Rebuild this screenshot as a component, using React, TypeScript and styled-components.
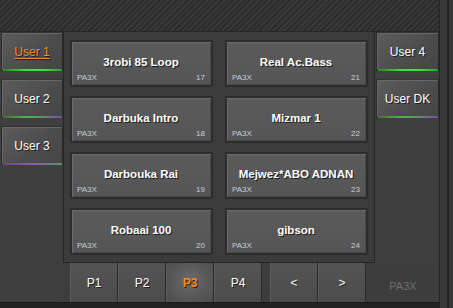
import styled, { createGlobalStyle } from "styled-components";

const Global = createGlobalStyle`
    html, body {
        margin: 0;
        padding: 0;
        background: #2b2b2b;
        font-family: "Liberation Sans", Arial, sans-serif;
    }
`;

const Screen = styled.div`
    width: 453px;
    height: 308px;
    display: flex;
    overflow: hidden;
`;

const Main = styled.div`
    width: 439px;
    display: flex;
    flex-direction: column;
`;

const Edge = styled.div`
    width: 14px;
    background: #383838;
    border-left: 1px solid #242424;
    box-sizing: border-box;
    display: flex;
    justify-content: flex-end;
    padding-right: 4px;

    &::after {
        content: "";
        width: 2px;
        background: #232323;
    }
`;

const Stripes = styled.div`
    height: 31px;
    border-bottom: 1px solid #262626;
    background: repeating-linear-gradient(
        135deg,
        #2c2c2c 0px,
        #2c2c2c 2px,
        #393939 2px,
        #393939 4px
    );
`;

const Body = styled.div`
    display: grid;
    grid-template-columns: 63px 312px 64px;
    grid-template-rows: 231px 39px;
    background: #3d3d3d;
`;

const TabColumn = styled.div<{ $side: "left" | "right" }>`
    grid-column: ${(p) => (p.$side === "left" ? 1 : 3)};
    grid-row: ${(p) => (p.$side === "left" ? "1 / 3" : "1")};
    display: flex;
    flex-direction: column;
    gap: 8px;
    background: #3f3f3f;
    padding-left: 1px;
`;

const Tab = styled.div<{ $active?: boolean; $line: "green" | "mixed" | "purple" }>`
    height: 39px;
    box-sizing: border-box;
    display: flex;
    align-items: center;
    justify-content: center;
    background: linear-gradient(135deg, #5c5c5c 0%, #4d4d4d 55%, #454545 100%);
    border: 1px solid #2a2a2a;
    border-top-color: #333;
    box-shadow: inset 1px 1px 0 #676767;
    position: relative;
    font-size: 12px;
    color: ${(p) => (p.$active ? "#ff8c1a" : "#ffffff")};
    text-decoration: ${(p) => (p.$active ? "underline" : "none")};
    text-underline-offset: 2px;
    text-shadow: 1px 1px 0 #1e1e1e;

    &::after {
        content: "";
        position: absolute;
        left: 1px;
        right: 0;
        bottom: -1px;
        height: 2px;
        background: ${(p) =>
            p.$line === "green"
                ? "linear-gradient(90deg, #2a8a2a, #3ee03e 40%, #3ee03e 70%, #2fa02f)"
                : p.$line === "mixed"
                ? "linear-gradient(90deg, #4a6a3a, #4fb84f 40%, #7a4f9a 100%)"
                : "linear-gradient(90deg, #6a4a7a, #8a5aa8 50%, #5a9a5a)"};
    }
`;

const Panel = styled.div`
    grid-column: 2;
    grid-row: 1;
    background: #3b3b3b;
    border: 1px solid #262626;
    border-top: none;
    box-sizing: border-box;
    padding: 8px 7px 7px 6px;
    display: grid;
    grid-template-columns: 143px 143px;
    grid-auto-rows: 47px;
    column-gap: 12px;
    row-gap: 9px;
`;

const Card = styled.div`
    box-sizing: border-box;
    border: 2px solid #2c2c2c;
    background: linear-gradient(180deg, #5b5b5b 0%, #555555 100%);
    box-shadow: inset 1px 1px 0 #6c6c6c, inset -1px -1px 0 #4a4a4a;
    display: grid;
    grid-template-rows: 1fr auto;
    padding: 0 6px 3px 5px;
`;

const CardTitle = styled.div`
    align-self: center;
    text-align: center;
    font-size: 11.5px;
    font-weight: bold;
    color: #ffffff;
    text-shadow: 1px 1px 0 #1c1c1c;
    padding-top: 9px;
`;

const CardFoot = styled.div`
    display: flex;
    justify-content: space-between;
    font-size: 8px;
    color: #c8d0dc;
    line-height: 9px;
`;

const ButtonBar = styled.div`
    grid-column: 2;
    grid-row: 2;
    display: flex;
    padding-left: 7px;
    background: #3d3d3d;
`;

const Group = styled.div`
    display: flex;
    & + & {
        margin-left: 8px;
    }
`;

const PageButton = styled.div<{ $active?: boolean }>`
    width: 48px;
    height: 39px;
    box-sizing: border-box;
    display: flex;
    align-items: center;
    justify-content: center;
    border-right: 1px solid #2a2a2a;
    border-left: 1px solid #5c5c5c;
    background: ${(p) =>
        p.$active
            ? "radial-gradient(ellipse at 50% 45%, #6a6a6a 0%, #575757 60%, #4c4c4c 100%)"
            : "linear-gradient(180deg, #545454 0%, #4b4b4b 100%)"};
    font-size: 12px;
    font-weight: ${(p) => (p.$active ? "bold" : "normal")};
    color: ${(p) => (p.$active ? "#ff8c1a" : "#ffffff")};
    text-shadow: 1px 1px 0 #1e1e1e;
`;

const Brand = styled.div`
    grid-column: 3;
    grid-row: 2;
    display: flex;
    align-items: center;
    justify-content: center;
    padding-top: 6px;
    font-size: 11px;
    color: #6e6e6e;
    margin-left: -8px;
`;

const Floor = styled.div`
    height: 6px;
    background: #222;
    border-top: 1px solid #1a1a1a;
    box-sizing: border-box;
`;

const cards = [
    { title: "3robi 85 Loop", n: 17 },
    { title: "Real Ac.Bass", n: 21 },
    { title: "Darbuka Intro", n: 18 },
    { title: "Mizmar 1", n: 22 },
    { title: "Darbouka Rai", n: 19 },
    { title: "Mejwez*ABO ADNAN", n: 23 },
    { title: "Robaai 100", n: 20 },
    { title: "gibson", n: 24 },
];

export default function App() {
    return (
        <Screen>
            <Global />
            <Main>
                <Stripes />
                <Body>
                    <TabColumn $side="left">
                        <Tab $active $line="green">User 1</Tab>
                        <Tab $line="mixed">User 2</Tab>
                        <Tab $line="purple">User 3</Tab>
                    </TabColumn>
                    <Panel>
                        {cards.map((c) => (
                            <Card key={c.n}>
                                <CardTitle>{c.title}</CardTitle>
                                <CardFoot>
                                    <span>PA3X</span>
                                    <span>{c.n}</span>
                                </CardFoot>
                            </Card>
                        ))}
                    </Panel>
                    <TabColumn $side="right">
                        <Tab $line="green">User 4</Tab>
                        <Tab $line="mixed">User DK</Tab>
                    </TabColumn>
                    <ButtonBar>
                        <Group>
                            <PageButton>P1</PageButton>
                            <PageButton>P2</PageButton>
                            <PageButton $active>P3</PageButton>
                            <PageButton>P4</PageButton>
                        </Group>
                        <Group>
                            <PageButton>&lt;</PageButton>
                            <PageButton>&gt;</PageButton>
                        </Group>
                    </ButtonBar>
                    <Brand>PA3X</Brand>
                </Body>
                <Floor />
            </Main>
            <Edge />
        </Screen>
    );
}
